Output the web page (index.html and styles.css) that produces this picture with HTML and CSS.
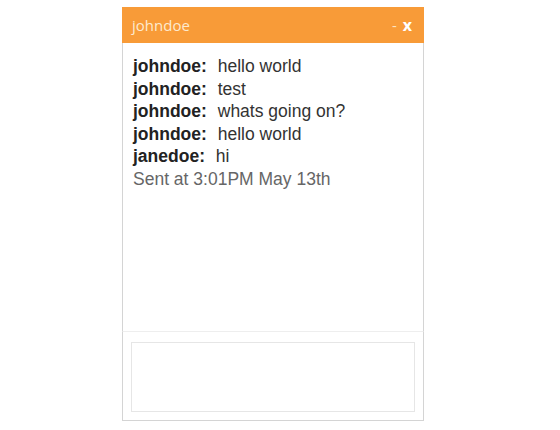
FILE: index.html
```html
<!DOCTYPE html>
<html lang="en">
<head>
    <meta charset="UTF-8">
    <title>Chat - johndoe</title>
    <link rel="stylesheet" href="styles.css">
</head>
<body>

    <div class="chat-window">
        <div class="chat-header">
            <span class="chat-title">johndoe</span>
            <span class="chat-controls">
                <span class="minimize">-</span>
                <span class="close">x</span>
            </span>
        </div>

        <div class="chat-messages">
            <p class="message"><span class="from">johndoe:</span> hello world</p>
            <p class="message"><span class="from">johndoe:</span> test</p>
            <p class="message"><span class="from">johndoe:</span> whats going on?</p>
            <p class="message"><span class="from">johndoe:</span> hello world</p>
            <p class="message"><span class="from">janedoe:</span> hi</p>
            <p class="sent">Sent at 3:01PM May 13th</p>
        </div>

        <div class="chat-footer">
            <textarea class="chat-input"></textarea>
        </div>
    </div>

</body>
</html>
```

FILE: styles.css
```css
body {
    margin: 0;
    padding: 0;
    background-color: #fff;
    font-family: "Liberation Sans", Arial, sans-serif;
}

.chat-window {
    width: 302px;
    margin: 7px 0 0 122px;
}

.chat-header {
    height: 36px;
    padding: 0 12px 0 10px;
    background-color: #f89b38;
    display: flex;
    justify-content: space-between;
    align-items: center;
    font-family: "Open Sans", sans-serif;
}

.chat-title {
    font-size: 15px;
    color: #fdeacf;
}

.chat-controls {
    display: flex;
    align-items: center;
    gap: 6px;
}

.minimize {
    color: #fde3c0;
    font-size: 15px;
}

.close {
    color: #fff;
    font-weight: bold;
    font-size: 16px;
}

.chat-messages {
    height: 276px;
    padding: 12px 10px 0 10px;
    border-left: 1px solid #d4d4d4;
    border-right: 1px solid #d4d4d4;
    border-bottom: 1px solid #eeeeee;
    font-size: 17.5px;
    line-height: 22.6px;
    color: #333;
}

.message, .sent {
    margin: 0;
}

.from {
    font-weight: bold;
    color: #222;
    margin-right: 6px;
}

.sent {
    color: #666;
}

.chat-footer {
    padding: 10px 8px 8px 8px;
    border: 1px solid #d4d4d4;
    border-top: none;
}

.chat-input {
    display: block;
    width: 100%;
    height: 70px;
    box-sizing: border-box;
    margin: 0;
    border: 1px solid #e6e6e6;
    resize: none;
    outline: none;
}
```
